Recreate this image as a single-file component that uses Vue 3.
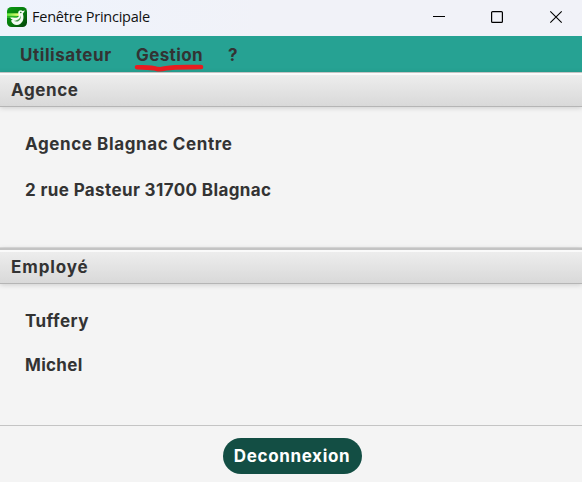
<script setup>
const menus = [
  { label: 'Utilisateur', cls: 'user' },
  { label: 'Gestion', cls: 'gestion', marked: true },
  { label: '?', cls: 'help' },
]
const panes = [
  { title: 'Agence', cls: 'agence', lines: ['Agence Blagnac Centre', '2 rue Pasteur 31700 Blagnac'] },
  { title: 'Employé', cls: 'employe', lines: ['Tuffery', 'Michel'] },
]
</script>

<template>
  <div class="window">
    <header class="titlebar">
      <svg class="logo" width="20" height="20" viewBox="0 0 20 20">
        <defs>
          <linearGradient id="bg" x1="0" y1="0" x2="1" y2="1">
            <stop offset="0" stop-color="#0a9a12" />
            <stop offset="0.55" stop-color="#06790d" />
            <stop offset="1" stop-color="#033f09" />
          </linearGradient>
          <linearGradient id="ray" x1="0" y1="0" x2="1" y2="0">
            <stop offset="0" stop-color="#5fe83c" />
            <stop offset="1" stop-color="#f2ff7a" />
          </linearGradient>
        </defs>
        <rect width="20" height="20" rx="4.5" fill="url(#bg)" />
        <path d="M0 6.3H12V8.9H0Z" fill="url(#ray)" />
        <path d="M0 8.9H11L9 11H0Z" fill="#2db526" />
        <path d="M18 3.6L15.6 4C14.4 2.5 11.4 3.2 11.2 5.4C11.1 7 12.3 7.9 11.7 9.2C10.8 11.2 7.5 10.6 3.2 10.6C3.8 12 4.8 12.5 5.8 12.8L4 13.4C4.8 17.2 9.6 19.2 13.2 16.9C16.8 14.4 17 10 15.8 6.8Z" fill="#f4fcf4" />
        <path d="M13.7 8.2C14.3 11.4 12.8 14.3 9.6 14.6C8.5 14.7 7.4 14.4 6.8 13.8C10.8 13.4 13.3 11.7 13.7 8.2Z" fill="#4a9a50" />
        <circle cx="13.8" cy="5.5" r=".8" fill="#15731d" />
      </svg>
      <span class="caption">Fenêtre Principale</span>
      <svg class="controls" width="132" height="14" viewBox="0 0 132 14" fill="none" stroke="#000">
        <path d="M1 6.5H13" />
        <rect x="59.6" y="1.6" width="10.8" height="10.8" rx="1" stroke-width="1.2" />
        <path d="M118.3 1.3L129.7 12.7M129.7 1.3L118.3 12.7" stroke-width="1.1" />
      </svg>
    </header>

    <nav class="menubar">
      <span v-for="m in menus" :key="m.label" class="menu" :class="m.cls">
        {{ m.label }}
        <svg v-if="m.marked" class="mark" width="71" height="9" viewBox="0 0 71 9">
          <path d="M3 3.2C12 3.5 18 3.2 22 4.7Q26.5 5.9 32 4.3C42 2.7 54 3.4 67 3" fill="none" stroke="#e81c1f" stroke-width="4.6" stroke-linecap="round" />
        </svg>
      </span>
    </nav>

    <main>
      <section v-for="p in panes" :key="p.title" class="pane" :class="p.cls">
        <h2><span>{{ p.title }}</span></h2>
        <div class="content">
          <p v-for="(line, i) in p.lines" :key="line" :class="'line' + i">{{ line }}</p>
        </div>
      </section>
    </main>

    <footer><button>Deconnexion</button></footer>
  </div>
</template>

<style>
body { margin: 0; overflow: hidden; }
</style>

<style scoped>
.window {
  display: flex; flex-direction: column;
  width: 582px; height: 482px; overflow: hidden;
  background: #f4f4f4; color: #333;
  font: 700 17px/20px Inter, sans-serif;
  letter-spacing: 0.6px;
}
.titlebar {
  display: flex; align-items: center; box-sizing: border-box;
  height: 36px; padding: 0 18px 2px 7px;
  background: linear-gradient(90deg, #eef3fc, #f1f2f8 45%);
}
.caption {
  margin-left: 5px; color: #111; letter-spacing: -0.24px;
  font: 400 14.5px/20px "Open Sans", sans-serif;
}
.controls { margin-left: auto; }
.menubar {
  display: flex; box-sizing: border-box; height: 36px;
  padding: 9px 20px 0; gap: 25px; background: #26a293;
}
.menu { position: relative; white-space: nowrap; }
.user { width: 91px; letter-spacing: 0.55px; }
.gestion { width: 67px; letter-spacing: 0.4px; }
.mark { position: absolute; left: -2px; top: 19px; }
h2 {
  box-sizing: border-box; height: 35px; margin: 0; padding: 7px 0 0 11px;
  font: inherit;
  border-top: 1px solid #c3c3c3; border-bottom: 1px solid #b5b5b5;
  background: linear-gradient(#fafafa 0 2px, #ededed 2px, #d9d9d9);
  box-shadow: 0 1px 5px rgba(0, 0, 0, 0.16);
}
.content { padding: 27px 0 0 25px; }
.agence { height: 175px; }
.employe { height: 178px; border-top: 1px solid #dcdcdc; box-sizing: border-box; }
.employe h2 { height: 36px; border-top-width: 2px; letter-spacing: 0.9px; }
p { margin: 0; white-space: nowrap; }
.content p + p { margin-top: 26px; }
.employe .content p + p { margin-top: 24px; }
.agence .line1 { letter-spacing: 0.38px; }
.employe .line0 { letter-spacing: 0.45px; }
.employe .line1 { letter-spacing: 0.3px; }
footer {
  display: flex; justify-content: center; box-sizing: border-box;
  height: 57px; padding: 12px 0 0 2px; border-top: 1px solid #c4c4c4;
}
button {
  width: 139px; height: 36px; padding: 0; border: 0; border-radius: 18px;
  background: #134e44; color: #fff; font: inherit; letter-spacing: 0.65px; white-space: nowrap;
}
</style>
